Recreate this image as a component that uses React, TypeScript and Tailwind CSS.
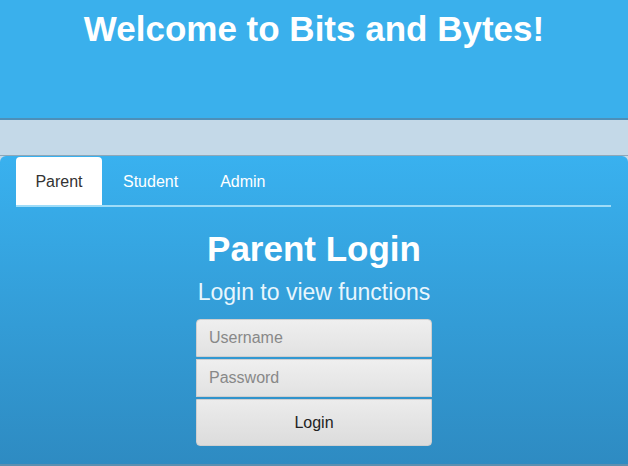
import { useState } from "react";

const tabs = ["Parent", "Student", "Admin"];

const App = () => {
	const [tab, setTab] = useState("Parent");

	return (
		<div className="w-[628px] h-[466px] overflow-hidden flex flex-col bg-[#c4d9e8] font-['Liberation_Sans',Arial,sans-serif]">
			<header className="h-[120px] shrink-0 bg-[#3ab0ec] border-b-2 border-[#4d8fb8] flex justify-center pt-[9px]">
				<h1 className="text-[35px] leading-[40px] font-bold text-white">
					Welcome to Bits and Bytes!
				</h1>
			</header>

			<div className="h-[36px] shrink-0 border-b border-[#8ea7b8]" />

			<main className="flex-1 pt-[1px] rounded-t-md bg-gradient-to-b from-[#39b1ef] to-[#2e8bc2] border-b-2 border-[#5b8fb0] flex flex-col">
				<nav className="ml-[16px] mr-[17px] flex border-b-2 border-[#9fdcf8]">
					{tabs.map((t) => (
						<button
							key={t}
							type="button"
							onClick={() => setTab(t)}
							className={
								t === tab
									? "h-[48px] w-[86px] pt-[2px] rounded-t bg-white text-[16px] text-[#333]"
									: "h-[48px] pt-[2px] px-[21px] text-[16px] text-white"
							}
						>
							{t}
						</button>
					))}
				</nav>

				<div className="flex flex-col items-center pt-[22px]">
					<h2 className="text-[35px] leading-[40px] font-bold text-white">
						{tab} Login
					</h2>
					<p className="mt-[10px] text-[23px] leading-[27px] text-[#e8f6fd]">
						Login to view functions
					</p>

					<form
						className="mt-[13px] w-[236px] flex flex-col gap-[2px]"
						onSubmit={(e) => e.preventDefault()}
					>
						<input
							placeholder="Username"
							className="h-[38px] px-[12px] rounded-t bg-gradient-to-b from-[#efefef] to-[#e2e2e2] border border-[#cfcfcf] text-[16px] text-[#333] placeholder:text-[#888] outline-none"
						/>
						<input
							type="password"
							placeholder="Password"
							className="h-[38px] px-[12px] bg-gradient-to-b from-[#efefef] to-[#e2e2e2] border border-[#cfcfcf] text-[16px] text-[#333] placeholder:text-[#888] outline-none"
						/>
						<button
							type="submit"
							className="h-[47px] rounded-b bg-gradient-to-b from-[#ececec] to-[#dcdcdc] border border-[#cfcfcf] text-[16px] text-[#222]"
						>
							Login
						</button>
					</form>
				</div>
			</main>
		</div>
	);
};

export default App;
